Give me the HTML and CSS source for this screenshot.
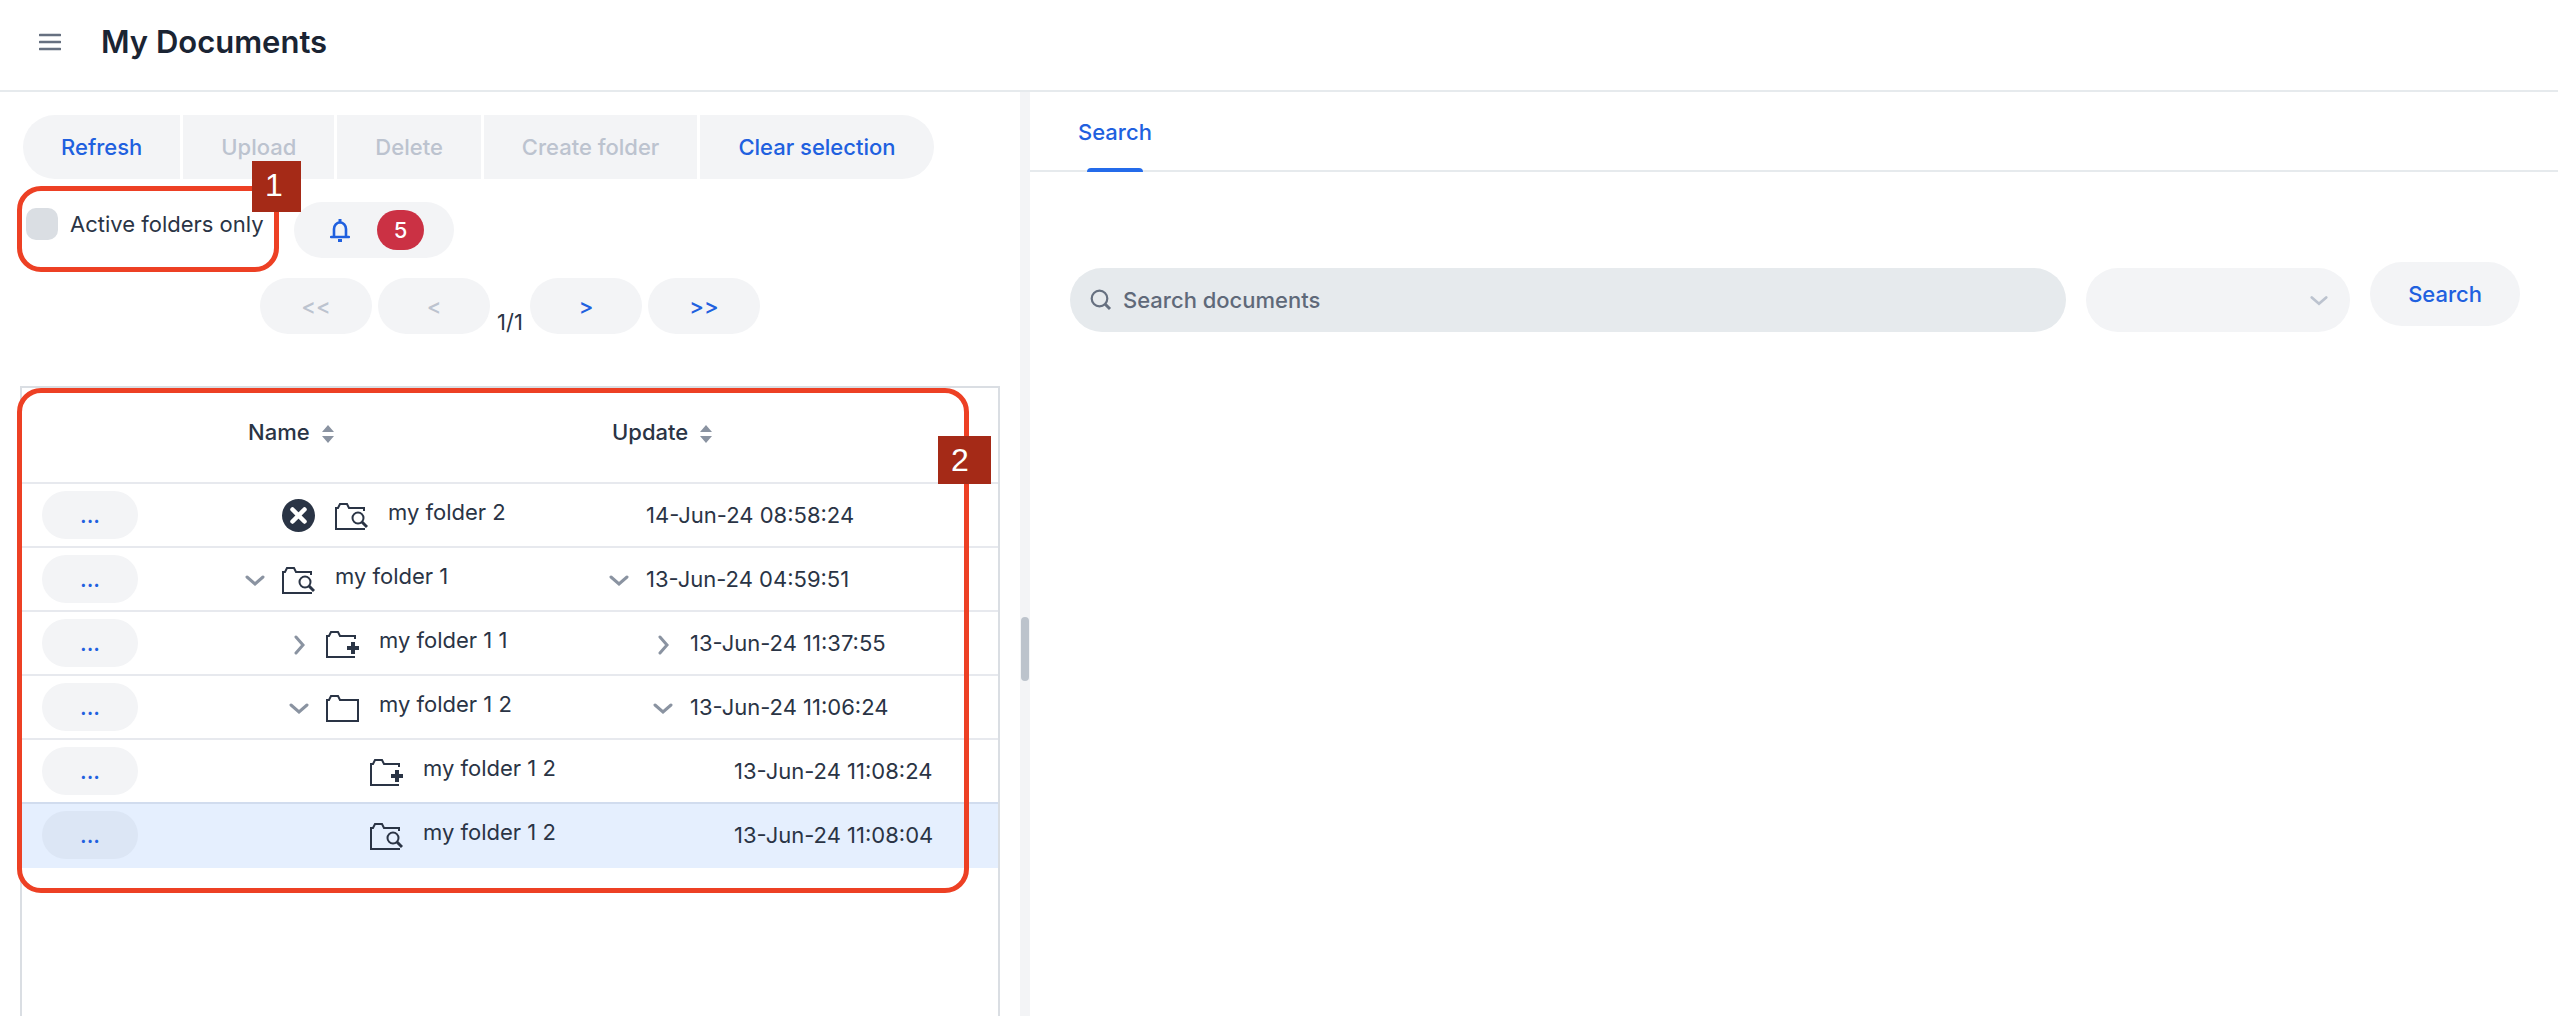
FILE: index.html
```html
<!DOCTYPE html>
<html lang="en">
<head>
<meta charset="utf-8">
<title>My Documents</title>
<link rel="stylesheet" href="styles.css">
</head>
<body>
<svg class="sprite" aria-hidden="true">
  <symbol id="folder" viewBox="0 0 33 28"><path d="M1 5H3L5 1H12L14 5H32V26H1Z" fill="none" stroke="currentColor" stroke-width="2"/></symbol>
  <symbol id="folder-search" viewBox="0 0 33 28"><path d="M29 8V5H14L12 1H5L3 5H1V26H29V25" fill="none" stroke="currentColor" stroke-width="2"/><circle cx="23" cy="15" r="5.5" fill="none" stroke="currentColor" stroke-width="2"/><path d="M27 19L32 24" stroke="currentColor" stroke-width="3"/></symbol>
  <symbol id="folder-plus" viewBox="0 0 33 28"><path d="M29 8V5H14L12 1H5L3 5H1V26H29" fill="none" stroke="currentColor" stroke-width="2"/><path d="M27 11V23M21 17H33" stroke="currentColor" stroke-width="4"/></symbol>
  <symbol id="down" viewBox="0 0 20 20"><path d="M2 6L10 13L18 6" fill="none" stroke="currentColor" stroke-width="3" stroke-linecap="round"/></symbol>
  <symbol id="right" viewBox="0 0 20 20"><path d="M7 2L14 10L7 18" fill="none" stroke="currentColor" stroke-width="3" stroke-linecap="round"/></symbol>
  <symbol id="sort" viewBox="0 0 12 18"><path d="M6 0L12 7H0ZM6 18L12 11H0Z" fill="currentColor"/></symbol>
  <symbol id="remove" viewBox="0 0 33 33"><circle cx="16.5" cy="16.5" r="16.5" fill="currentColor"/><path d="M10.5 10.5L22.5 22.5M22.5 10.5L10.5 22.5" stroke="#fff" stroke-width="4.5" stroke-linecap="round"/></symbol>
</svg>

<header class="header">
  <button class="menu" aria-label="Menu"><svg width="22" height="18" viewBox="0 0 22 18"><path d="M1 2H21M1 9H21M1 16H21" stroke="currentColor" stroke-width="2.6" stroke-linecap="round"/></svg></button>
  <h1 class="title">My Documents</h1>
</header>

<div class="panes">
  <main class="left">
    <div class="toolbar">
      <button class="tool">Refresh</button>
      <button class="tool" disabled>Upload</button>
      <button class="tool" disabled>Delete</button>
      <button class="tool" disabled>Create folder</button>
      <button class="tool">Clear selection</button>
    </div>
    <div class="filters">
      <div class="active-filter">
        <label class="check"><input class="box" type="checkbox">Active folders only</label>
        <div class="callout callout-filter"><span class="number">1</span></div>
      </div>
      <button class="alerts" aria-label="Notifications, 5">
        <svg width="20" height="24" viewBox="0 0 20 24"><path d="M4 19V11A6 6.500 0 0 1 16 11V19" fill="none" stroke="currentColor" stroke-width="2.600"/><path d="M1 19H19" stroke="currentColor" stroke-width="2.400" stroke-linecap="round"/><path d="M10 1V5M8 22.500H12" stroke="currentColor" stroke-width="3"/></svg>
        <span class="count">5</span>
      </button>
    </div>
    <nav class="pager" aria-label="Pages">
      <button class="page" disabled>&lt;&lt;</button>
      <button class="page" disabled>&lt;</button>
      <span class="position">1/1</span>
      <button class="page">&gt;</button>
      <button class="page">&gt;&gt;</button>
    </nav>
    <section class="documents">
      <table class="tree">
        <colgroup><col class="col-action"><col class="col-name"><col class="col-update"></colgroup>
        <thead>
          <tr>
            <th></th>
            <th><span class="heading">Name <svg class="sort"><use href="#sort"/></svg></span></th>
            <th><span class="heading">Update <svg class="sort"><use href="#sort"/></svg></span></th>
          </tr>
        </thead>
        <tbody>
          <tr>
            <td><button class="more">...</button></td>
            <td><div class="node"><span class="toggle"></span><svg class="remove"><use href="#remove"/></svg><svg class="folder"><use href="#folder-search"/></svg><span class="name">my folder 2</span></div></td>
            <td><div class="node"><span class="toggle"></span>14-Jun-24 08:58:24</div></td>
          </tr>
          <tr>
            <td><button class="more">...</button></td>
            <td><div class="node"><span class="toggle"><svg class="arrow"><use href="#down"/></svg></span><svg class="folder"><use href="#folder-search"/></svg><span class="name">my folder 1</span></div></td>
            <td><div class="node"><span class="toggle"><svg class="arrow"><use href="#down"/></svg></span>13-Jun-24 04:59:51</div></td>
          </tr>
          <tr>
            <td><button class="more">...</button></td>
            <td><div class="node level-1"><span class="toggle"><svg class="arrow"><use href="#right"/></svg></span><svg class="folder"><use href="#folder-plus"/></svg><span class="name">my folder 1 1</span></div></td>
            <td><div class="node level-1"><span class="toggle"><svg class="arrow"><use href="#right"/></svg></span>13-Jun-24 11:37:55</div></td>
          </tr>
          <tr>
            <td><button class="more">...</button></td>
            <td><div class="node level-1"><span class="toggle"><svg class="arrow"><use href="#down"/></svg></span><svg class="folder"><use href="#folder"/></svg><span class="name">my folder 1 2</span></div></td>
            <td><div class="node level-1"><span class="toggle"><svg class="arrow"><use href="#down"/></svg></span>13-Jun-24 11:06:24</div></td>
          </tr>
          <tr class="before-selected">
            <td><button class="more">...</button></td>
            <td><div class="node level-2"><span class="toggle"></span><svg class="folder"><use href="#folder-plus"/></svg><span class="name">my folder 1 2</span></div></td>
            <td><div class="node level-2"><span class="toggle"></span>13-Jun-24 11:08:24</div></td>
          </tr>
          <tr class="selected">
            <td><button class="more">...</button></td>
            <td><div class="node level-2"><span class="toggle"></span><svg class="folder"><use href="#folder-search"/></svg><span class="name">my folder 1 2</span></div></td>
            <td><div class="node level-2"><span class="toggle"></span>13-Jun-24 11:08:04</div></td>
          </tr>
        </tbody>
      </table>
      <div class="callout callout-tree"><span class="number">2</span></div>
    </section>
  </main>

  <div class="splitter" role="separator" aria-orientation="vertical"><span class="grip"></span></div>

  <section class="right">
    <nav class="tabs"><a class="tab" href="#search">Search</a></nav>
    <form class="search" id="search">
      <label class="query">
        <svg width="22" height="22" viewBox="0 0 22 22"><circle cx="9.500" cy="9.500" r="7.800" fill="none" stroke="currentColor" stroke-width="2.200"/><path d="M15 15L20 20" stroke="currentColor" stroke-width="3"/></svg>
        <input class="field" type="text" placeholder="Search documents" aria-label="Search documents">
      </label>
      <div class="scope">
        <select class="select" aria-label="Scope"><option></option></select>
        <svg class="scope-arrow"><use href="#down"/></svg>
      </div>
      <button class="submit" type="button">Search</button>
    </form>
  </section>
</div>
</body>
</html>
```
FILE: styles.css
```css
* { box-sizing: border-box; }
html, body { height: 100%; }
body {
  margin: 0;
  display: flex;
  flex-direction: column;
  overflow: hidden;
  background: #fff;
  color: #2a3445;
  font: 400 22px/28px Inter, "Liberation Sans", sans-serif;
}
svg { display: block; flex: none; }
.sprite { position: absolute; width: 0; height: 0; }
button, input, select { font: inherit; color: inherit; border: 0; margin: 0; padding: 0; background: none; }
button { font-weight: 500; color: #2060df; background: #f3f4f6; }
button:disabled { color: #bcc3cf; }

.header {
  display: flex;
  align-items: center;
  gap: 40px;
  height: 92px;
  padding: 0 39px 6px;
  flex: none;
  border-bottom: 2px solid #e6eaed;
}
.menu { background: none; color: #667080; }
.title { margin: 0; font-size: 31px; line-height: 40px; font-weight: 600; color: #1a2433; }

.panes { flex: 1; min-height: 0; display: grid; grid-template-columns: 1020fr 10px 1528fr; }
.left { display: flex; flex-direction: column; padding: 23px 20px 0; min-width: 0; }

.toolbar { display: flex; gap: 3px; padding-left: 3px; }
.tool { height: 64px; padding: 0 38px; }
.tool:first-child { border-radius: 32px 0 0 32px; }
.tool:last-child { border-radius: 0 32px 32px 0; }

.filters { display: flex; align-items: center; gap: 30px; margin-top: 23px; padding-left: 6px; }
.active-filter { position: relative; width: 238px; height: 56px; padding-top: 6px; }
.check { display: flex; align-items: center; gap: 12px; height: 32px; white-space: nowrap; }
.box { appearance: none; width: 32px; height: 32px; border-radius: 10px; background: #dadee3; }
.alerts { display: flex; align-items: center; justify-content: space-between; width: 160px; height: 56px; padding: 0 30px 0 36px; border-radius: 28px; }
.count { width: 47px; line-height: 40px; border-radius: 20px; background: #cb3144; color: #fff; text-align: center; }

.pager { display: flex; align-items: flex-end; justify-content: center; gap: 6px; margin-top: 20px; }
.page { width: 112px; height: 56px; border-radius: 28px; }
.position { width: 28px; line-height: 24px; text-align: center; }

.documents { position: relative; flex: 1; margin-top: 52px; border: 2px solid #dadee3; border-bottom: 0; }
.tree { width: 100%; table-layout: fixed; border-collapse: separate; border-spacing: 0; }
.col-action { width: 216px; }
.col-name { width: 364px; }
th { height: 96px; padding: 0 0 6px 10px; text-align: left; font-weight: 500; border-bottom: 2px solid #e7e9ee; }
td { height: 64px; padding: 0; border-bottom: 2px solid #e7e9ee; }
td:first-child { padding-left: 20px; }
.before-selected td { border-color: #d1dcee; }
.selected td { background: #e5effe; border-color: #e5effe; }
.heading { display: flex; align-items: center; gap: 12px; }
.sort { width: 12px; height: 18px; margin-top: 4px; color: #8a93a1; }
.more { display: block; width: 96px; height: 48px; border-radius: 24px; }
.selected .more { background: #dce6f5; }
.node { display: flex; align-items: center; height: 48px; }
.level-1 { padding-left: 44px; }
.level-2 { padding-left: 88px; }
.toggle { width: 44px; flex: none; padding-left: 7px; color: #8a93a1; }
.arrow { width: 20px; height: 20px; margin-top: 4px; }
.remove { width: 33px; height: 33px; margin-right: 20px; }
.folder { width: 33px; height: 28px; margin: 3px 20px 0 0; }
.name { padding-bottom: 6px; }

.callout { position: absolute; border: 5px solid #ed4024; border-radius: 24px; pointer-events: none; }
.callout-filter { left: -9px; right: -15px; top: -16px; bottom: -14px; }
.callout-tree { left: -5px; right: 29px; top: 0; height: 505px; }
.number { position: absolute; background: #a52a17; color: #fff; font: 32px/48px "Liberation Sans", Arial, sans-serif; text-align: left; padding-left: 13px; }
.callout-filter .number { right: -27px; top: -30px; width: 49px; padding-bottom: 3px; }
.callout-tree .number { right: -27px; top: 43px; width: 53px; }

.splitter { display: flex; align-items: center; justify-content: center; background: #f3f4f6; }
.grip { width: 8px; height: 64px; margin-top: 190px; border-radius: 4px; background: #bcc3cc; }

.right { min-width: 0; }
.tabs { display: flex; height: 80px; padding-left: 48px; border-bottom: 2px solid #e6eaed; }
.tab { position: relative; padding-top: 26px; color: #2060df; font-weight: 500; text-decoration: none; }
.tab::after { content: ""; position: absolute; left: 9px; right: 9px; bottom: -2px; height: 4px; border-radius: 4px 4px 0 0; background: #246bea; }
.search { display: flex; align-items: flex-start; gap: 20px; padding: 90px 38px 0 40px; }
.query { flex: 1; display: flex; align-items: center; gap: 11px; height: 64px; margin-top: 6px; padding: 0 20px; border-radius: 32px; background: #e6eaed; color: #667080; }
.field { flex: 1; min-width: 0; outline: 0; }
.field::placeholder { color: #5f6979; opacity: 1; font-weight: 500; }
.scope { position: relative; width: 264px; height: 64px; margin-top: 6px; }
.select { appearance: none; width: 100%; height: 100%; border-radius: 32px; background: #f3f4f6; }
.scope-arrow { position: absolute; right: 22px; top: 23px; width: 18px; height: 20px; color: #bcc3cf; }
.submit { height: 64px; padding: 0 38px; border-radius: 32px; }
```
